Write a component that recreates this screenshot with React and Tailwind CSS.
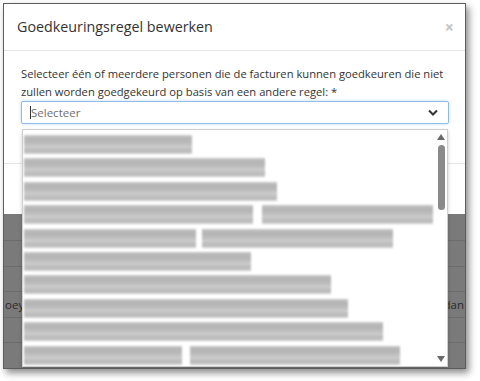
import React from 'react';

const rows = [
    [[0, 168]],
    [[0, 241]],
    [[0, 253]],
    [[0, 229], [238, 171]],
    [[0, 172], [178, 191]],
    [[0, 227]],
    [[0, 307]],
    [[0, 324]],
    [[0, 359]],
    [[0, 158], [166, 210]],
];

const bgRows = [27, 26, 25, 26, 25, 26, 25];

const Blur = ({ left, width }) => (
    <div
        className="absolute top-[2px] h-[19px] blur-[0.8px] bg-[linear-gradient(to_bottom,#c6c6c6_0%,#b3b3b3_22%,#bdbdbd_45%,#cdcdcd_62%,#b8b8b8_82%,#cfcfcf_100%)]"
        style={{ left, width }}
    />
);

export default function App() {
    return (
        <div className="w-[480px] h-[381px] bg-white font-['Open_Sans',sans-serif] pt-[3px] pl-[3px]">
            <div className="relative w-[463px] h-[366px] border border-[#5c5c5c] bg-[#7a7a7a] overflow-hidden shadow-[3px_4px_7px_rgba(0,0,0,0.45)]">
                {/* modal */}
                <div className="bg-white h-[210px] flex flex-col">
                    <div className="h-[47px] border-b border-[#e5e5e5] flex items-center justify-between pl-[13px] pr-[11px]">
                        <h4 className="text-[14.3px] leading-[22px] text-[#333]">Goedkeuringsregel bewerken</h4>
                        <span className="text-[16px] leading-none text-[#c4c4c4] font-bold">×</span>
                    </div>
                    <div className="h-[112px] pt-[14px] pl-[17px] pr-[16px]">
                        <p className="text-[11.2px] leading-[18px] text-[#333]">
                            Selecteer één of meerdere personen die de facturen kunnen goedkeuren die niet zullen worden goedgekeurd op basis van een andere regel: *
                        </p>
                        <div className="h-[23px] border border-[#8fbde6] rounded-[2px] shadow-[0_0_3px_rgba(102,175,233,0.5)] flex items-center justify-between pl-[8px] pr-[10px]">
                            <div className="flex items-center">
                                <span className="w-px h-[13px] bg-[#333]" />
                                <span className="text-[11.5px] text-[#6f6f6f]">Selecteer</span>
                            </div>
                            <svg width="10" height="7" viewBox="0 0 10 7">
                                <polyline points="1,1.5 5,5.5 9,1.5" fill="none" stroke="#333" strokeWidth="2" />
                            </svg>
                        </div>
                    </div>
                    <div className="flex-1 border-t border-[#e5e5e5]" />
                </div>

                {/* page behind the overlay */}
                <div className="text-[11.5px] text-[#2a2a2a]">
                    {bgRows.map((h, i) => (
                        <div key={i} className="border-b border-[#6c6c6c] flex items-center justify-between pl-[1px] pr-[1px]" style={{ height: h }}>
                            {i === 3 && (
                                <>
                                    <span>oey</span>
                                    <span>dan</span>
                                </>
                            )}
                        </div>
                    ))}
                </div>

                {/* dropdown list */}
                <div className="absolute left-[18px] top-[125px] w-[426px] h-[238px] bg-white border border-[#cfcfcf] shadow-[0_2px_4px_rgba(0,0,0,0.2)] overflow-hidden">
                    <div className="pt-[3px] pl-[1px]">
                        {rows.map((segs, i) => (
                            <div key={i} className="relative h-[23.4px]">
                                {segs.map(([l, w], j) => (
                                    <Blur key={j} left={l} width={w} />
                                ))}
                            </div>
                        ))}
                    </div>
                    <div className="absolute right-[1px] top-0 bottom-0 w-[10px] flex flex-col items-center">
                        <svg width="8" height="6" viewBox="0 0 8 6" className="mt-[4px]">
                            <polygon points="4,0 8,6 0,6" fill="#6a6a6a" />
                        </svg>
                        <div className="mt-[5px] w-[7px] h-[65px] rounded-full bg-[#8a8a8a]" />
                        <div className="flex-1" />
                        <svg width="8" height="6" viewBox="0 0 8 6" className="mb-[4px]">
                            <polygon points="0,0 8,0 4,6" fill="#6a6a6a" />
                        </svg>
                    </div>
                </div>
            </div>
        </div>
    );
}
